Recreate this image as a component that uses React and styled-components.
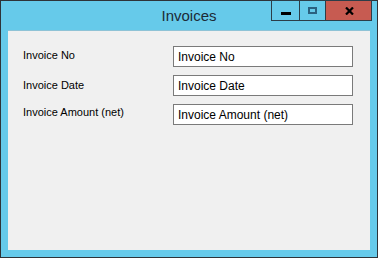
import React from "react";
import styled, { createGlobalStyle } from "styled-components";

const Global = createGlobalStyle`
  html, body { margin: 0; padding: 0; background: #ffffff; }
  body { font-family: "Liberation Sans", Arial, sans-serif; }
`;

const Window = styled.div`
  width: 378px;
  height: 258px;
  box-sizing: border-box;
  border: 1px solid #2e3338;
  background: #66caea;
  display: flex;
  flex-direction: column;
  padding: 0 7px 7px 7px;
`;

const TitleBar = styled.div`
  height: 29px;
  margin: 0 -7px;
  display: grid;
  grid-template-columns: 1fr auto 1fr;
  align-items: start;
`;

const Title = styled.div`
  grid-column: 2;
  font-family: "Liberation Sans", Arial, sans-serif;
  font-size: 15px;
  line-height: 17px;
  padding-top: 6px;
  color: #1c2a36;
`;

const Controls = styled.div`
  grid-column: 3;
  justify-self: end;
  margin-top: -1px;
  margin-right: 5px;
  display: flex;
  border: 1px solid #2c3d48;
  height: 19px;
`;

const CtrlButton = styled.div`
  width: ${(p) => p.$w}px;
  height: 19px;
  background: ${(p) => (p.$close ? "#c75b51" : "transparent")};
  border-left: ${(p) => (p.$first ? "none" : "1px solid #2c3d48")};
  display: flex;
  justify-content: center;
  align-items: flex-start;
`;

const MinGlyph = styled.div`
  width: 10px;
  height: 3px;
  background: #000;
  margin-top: 11px;
  margin-left: 1px;
`;

const MaxGlyph = styled.div`
  width: 9px;
  height: 7px;
  box-sizing: border-box;
  border: 2px solid #2a6180;
  margin-top: 6px;
`;

const CloseGlyph = styled.svg`
  margin-top: 6px;
  margin-left: 1px;
`;

const Client = styled.div`
  flex: 1;
  background: #f0f0f0;
  border-top: 1px solid #8fc3d6;
  box-sizing: border-box;
  padding: 15px 0 0 15px;
`;

const Form = styled.div`
  display: grid;
  grid-template-columns: 150px 180px;
  row-gap: 8px;
`;

const Label = styled.div`
  font-family: "Liberation Sans", Arial, sans-serif;
  font-size: 11px;
  line-height: 13px;
  color: #000;
  padding-top: ${(p) => p.$pt}px;
`;

const Input = styled.input`
  width: 180px;
  height: 21px;
  box-sizing: border-box;
  border: 1px solid #7a7a7a;
  background: #fff;
  padding: 0 0 0 4px;
  margin: 0;
  font-family: "Liberation Sans", Arial, sans-serif;
  font-size: 12px;
  color: #000;
  outline: none;
`;

const rows = [
  { label: "Invoice No", pt: 3 },
  { label: "Invoice Date", pt: 4 },
  { label: "Invoice Amount (net)", pt: 2 },
];

export default function App() {
  return (
    <>
      <Global />
      <Window>
        <TitleBar>
          <Title>Invoices</Title>
          <Controls>
            <CtrlButton $w={27} $first>
              <MinGlyph />
            </CtrlButton>
            <CtrlButton $w={25}>
              <MaxGlyph />
            </CtrlButton>
            <CtrlButton $w={45} $close>
              <CloseGlyph width="9" height="8" viewBox="0 0 9 8">
                <path d="M1 0.5 L8 7.5 M8 0.5 L1 7.5" stroke="#000" strokeWidth="2.2" />
              </CloseGlyph>
            </CtrlButton>
          </Controls>
        </TitleBar>
        <Client>
          <Form>
            {rows.map((r) => (
              <React.Fragment key={r.label}>
                <Label $pt={r.pt}>{r.label}</Label>
                <Input readOnly defaultValue={r.label} />
              </React.Fragment>
            ))}
          </Form>
        </Client>
      </Window>
    </>
  );
}
